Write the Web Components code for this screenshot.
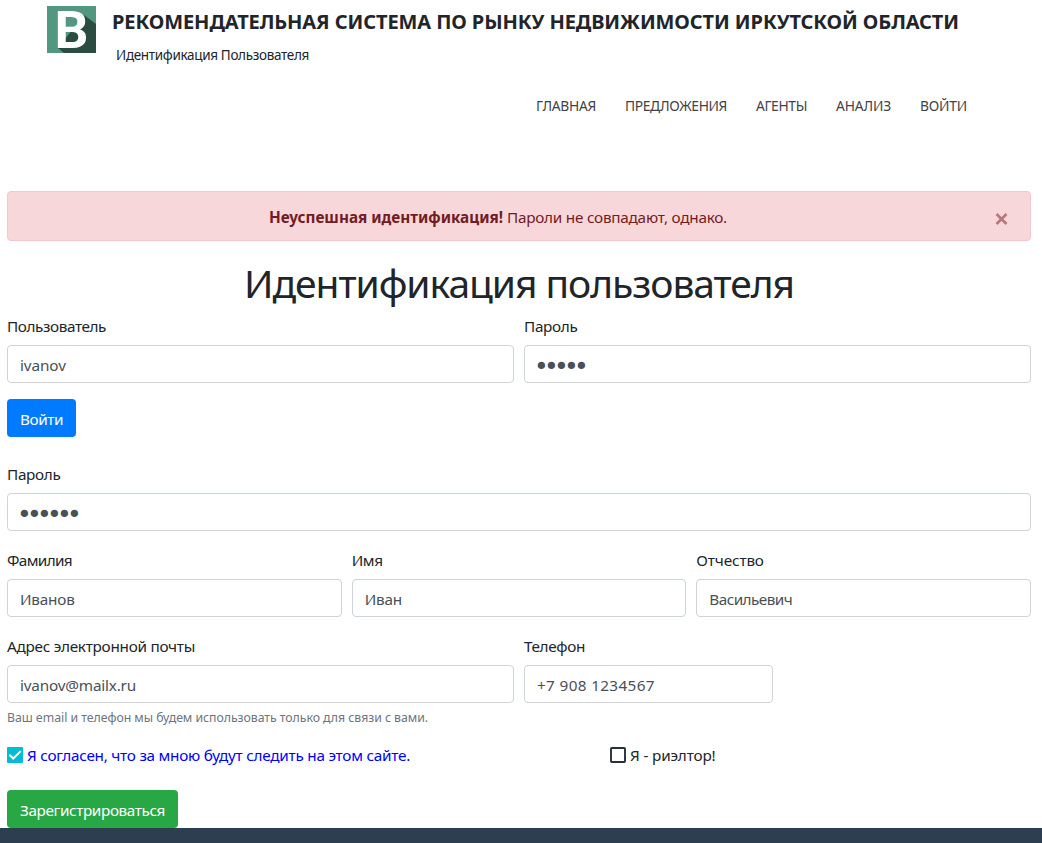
<!DOCTYPE html>
<html lang="ru">
<head>
<meta charset="utf-8">
<title>Идентификация Пользователя</title>
<style>
html,body{margin:0;background:#fff}
body{font:15.3px/24px "Noto Sans","Open Sans",sans-serif;color:#212529;height:843px;overflow:hidden}
</style>
</head>
<body>
<auth-page></auth-page>
<script>
const define = (name, html, setup) => customElements.define(name, class extends HTMLElement {
  constructor() {
    super();
    const t = document.createElement('template');
    t.innerHTML = html;
    this.attachShadow({mode: 'open'}).append(t.content.cloneNode(true));
  }
  connectedCallback() { if (setup) setup(this, this.shadowRoot); }
});

define('site-logo', `
<style>:host{display:block;width:49px;height:47px}svg{display:block;overflow:visible}
text{font:bold 51px Roboto,"Noto Sans",sans-serif;fill:#fff}</style>
<svg width="49" height="47" viewBox="0 0 49 47">
<rect width="49" height="47" fill="#529780"/>
<path d="M37 9L49 18V47H17L11 42Z" fill="#2c4b41"/>
<text x="7.5" y="42" textLength="34" lengthAdjust="spacingAndGlyphs">B</text>
</svg>`);

define('site-header', `
<style>
:host{display:block;height:191px}
.brand{display:flex;padding:6px 0 0 47px;gap:16px}
h2{margin:4px 0 0;font-size:20px;line-height:24px;font-weight:700}
p{margin:11px 0 0 4px;font-size:13.5px;line-height:20px}
nav{display:flex;justify-content:flex-end;gap:29px;padding:31px 75px 0 0;font-size:13.8px;line-height:20px;color:#3f4347}
</style>
<div class="brand"><site-logo></site-logo><div><h2><text-run w="847">РЕКОМЕНДАТЕЛЬНАЯ СИСТЕМА ПО РЫНКУ НЕДВИЖИМОСТИ ИРКУТСКОЙ ОБЛАСТИ</text-run></h2><p><text-run w="193">Идентификация Пользователя</text-run></p></div></div>
<nav><text-run w="60">ГЛАВНАЯ</text-run><text-run w="102">ПРЕДЛОЖЕНИЯ</text-run><text-run w="51">АГЕНТЫ</text-run><text-run w="55">АНАЛИЗ</text-run><text-run w="47">ВОЙТИ</text-run></nav>`);

define('alert-box', `
<style>
:host{display:flex;box-sizing:border-box;height:50px;border:1px solid #f5c6cb;border-radius:4px;background:#f8d7da;color:#721c24;align-items:center;padding:2px 22px 0 0}
.m{flex:1;text-align:center;padding-right:7px}
svg{display:block;margin-top:4px}
</style>
<div class="m"><slot></slot></div>
<svg width="13" height="12" viewBox="0 0 13 12"><path d="M1.5 1L11.5 11M11.5 1L1.5 11" stroke="#b9777d" stroke-width="2.6"/></svg>`);

define('form-field', `
<style>
:host{display:block;min-width:0}
label{display:block;height:23px;padding-top:1px;margin-bottom:8px}
input{display:block;box-sizing:border-box;width:100%;height:38px;margin:0;padding:8px 12px 6px;border:1px solid #ced4da;border-radius:4px;background:#fff;color:#495057;font:inherit;letter-spacing:var(--ls,0);outline:0}
input[type=password]{font-family:"DejaVu Sans",sans-serif;font-size:25px;letter-spacing:-4.75px;padding:6px 9px 2px}
</style>
<label for="i"><slot></slot></label><input id="i">`,
  (el, root) => {
    const i = root.getElementById('i');
    i.type = el.getAttribute('type') || 'text';
    i.value = el.getAttribute('value');
  });

define('form-row', `<style>:host{display:grid;gap:10px;grid-template-columns:var(--cols,1fr);margin-bottom:16px}</style><slot></slot>`);

define('action-button', `
<style>:host{display:block}button{display:block;height:38px;padding:2px 13px 0;border:0;border-radius:4px;background:var(--bg);color:#fff;font:inherit;white-space:nowrap}</style>
<button type="button"><slot></slot></button>`);

define('check-item', `
<style>
:host{display:flex;gap:4px;line-height:22px}
svg{display:block;margin-top:3px}
.on{display:none}
:host([checked]) .on{display:inline}:host([checked]) .off{display:none}
</style>
<svg width="16" height="16" viewBox="0 0 16 16">
<rect class="off" x="1" y="1" width="14" height="14" rx=".8" fill="#fff" stroke="#263238" stroke-width="1.9"/>
<g class="on"><rect width="16" height="16" rx="1" fill="#00bcd4"/><path d="M2.3 7.7L6.2 11.5L13.7 4.1" fill="none" stroke="#fff" stroke-width="2"/></g>
</svg><slot></slot>`);

define('auth-page', `
<style>
:host{display:flex;flex-direction:column;height:843px}
main{padding:0 11px 0 7px}
h1{margin:18px 0 6px;font-size:39px;line-height:48px;font-weight:400;text-align:center}
.login{margin-bottom:24px}
small{display:block;margin-top:-11px;font-size:12.3px;line-height:20px;color:#6c757d}
.checks{display:grid;grid-template-columns:603px 1fr;margin-top:16px;height:46px}
.agree{color:#00f}
footer{flex:1;background:#2c3e50}
</style>
<site-header></site-header>
<main>
<alert-box><b><text-run w="234">Неуспешная идентификация!</text-run></b> <text-run w="220">Пароли не совпадают, однако.</text-run></alert-box>
<h1><text-run w="550">Идентификация пользователя</text-run></h1>
<form-row style="--cols:1fr 1fr"><form-field value="ivanov" style="--ls:-.1px"><text-run w="99">Пользователь</text-run></form-field><form-field type="password" value="12345"><text-run w="53.5">Пароль</text-run></form-field></form-row>
<action-button class="login" style="--bg:#007bff"><text-run w="43">Войти</text-run></action-button>
<form-row><form-field type="password" value="123456"><text-run w="53.5">Пароль</text-run></form-field></form-row>
<form-row style="--cols:1fr 1fr 1fr"><form-field value="Иванов" style="--ls:-.2px"><text-run w="65">Фамилия</text-run></form-field><form-field value="Иван" style="--ls:-.2px"><text-run w="31">Имя</text-run></form-field><form-field value="Васильевич" style="--ls:-.55px"><text-run w="67.5">Отчество</text-run></form-field></form-row>
<form-row style="--cols:507px 249px"><form-field value="ivanov@mailx.ru" style="--ls:-.2px"><text-run w="188">Адрес электронной почты</text-run></form-field><form-field value="+7 908 1234567" style="--ls:.35px"><text-run w="61">Телефон</text-run></form-field></form-row>
<small><text-run w="421">Ваш email и телефон мы будем использовать только для связи с вами.</text-run></small>
<div class="checks"><check-item class="agree" checked><text-run w="383">Я согласен, что за мною будут следить на этом сайте.</text-run></check-item><check-item><text-run w="85.5">Я - риэлтор!</text-run></check-item></div>
<action-button style="--bg:#28a745"><text-run w="145">Зарегистрироваться</text-run></action-button>
</main>
<footer></footer>`);

// Text run tracked to the width given in its "w" attribute. Defined last, when every host is laid out.
define('text-run', `<style>:host{display:inline-block;white-space:nowrap}</style><slot></slot>`,
  el => {
    const natural = el.getBoundingClientRect().width;
    if (natural) el.style.letterSpacing = (el.getAttribute('w') - natural) / el.textContent.length + 'px';
  });
</script>
</body>
</html>
